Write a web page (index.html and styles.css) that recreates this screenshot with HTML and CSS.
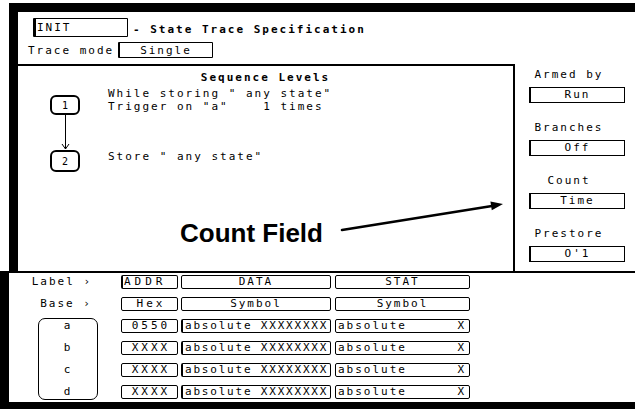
FILE: index.html
```html
<!DOCTYPE html>
<html>
<head>
<meta charset="utf-8">
<title>State Trace Specification</title>
<link rel="stylesheet" href="styles.css">
</head>
<body>
<div class="screen">
  <div class="topbar"></div>
  <div class="upper">
    <div class="lb-up"></div>
    <div class="upper-main">
      <header class="hdr">
        <div class="hrow1">
          <div class="fld init">INIT</div>
          <div class="title">- State Trace Specification</div>
        </div>
        <div class="hrow2">
          <span class="trace-lbl">Trace mode</span>
          <div class="fld single">Single</div>
        </div>
      </header>
      <div class="mid">
        <section class="seq">
          <h2 class="seq-title">Sequence Levels</h2>
          <div class="levels">
            <div class="node n1">1</div>
            <div class="ltext">While storing " any state"<br>Trigger on "a"&nbsp;&nbsp;&nbsp; 1 times</div>
            <svg class="link" width="30" height="35" viewBox="0 0 30 35">
              <line x1="15.5" y1="0" x2="15.5" y2="34" stroke="#000" stroke-width="1"/>
              <path d="M12 29 L15.5 34 L19 29" fill="none" stroke="#000" stroke-width="1"/>
            </svg>
            <div class="node n2">2</div>
            <div class="ltext">Store " any state"</div>
          </div>
          <div class="count-field">Count Field</div>
        </section>
        <aside class="panel">
          <div class="plabel">Armed by</div>
          <div class="pbox">Run</div>
          <div class="plabel">Branches</div>
          <div class="pbox">Off</div>
          <div class="plabel">Count</div>
          <div class="pbox">Time</div>
          <div class="plabel">Prestore</div>
          <div class="pbox last">O'1</div>
        </aside>
      </div>
    </div>
  </div>
  <div class="divider"></div>
  <div class="lower">
    <div class="lb-low"></div>
    <div class="lgrid">
      <div class="rowlbl">Label ›</div>
      <div class="cell c2 addr-lbl">ADDR</div>
      <div class="cell c3 center">DATA</div>
      <div class="cell c4 center">STAT</div>

      <div class="rowlbl">Base ›</div>
      <div class="cell c2 center wide">Hex</div>
      <div class="cell c3 center">Symbol</div>
      <div class="cell c4 center">Symbol</div>

      <div class="abox"><span>a</span><span>b</span><span>c</span><span>d</span></div>

      <div class="cell c2 center wide">0550</div>
      <div class="cell c3 data">absolute XXXXXXXX</div>
      <div class="cell c4 stat"><span>absolute</span><span>X</span></div>

      <div class="cell c2 center wide">XXXX</div>
      <div class="cell c3 data">absolute XXXXXXXX</div>
      <div class="cell c4 stat"><span>absolute</span><span>X</span></div>

      <div class="cell c2 center wide">XXXX</div>
      <div class="cell c3 data">absolute XXXXXXXX</div>
      <div class="cell c4 stat"><span>absolute</span><span>X</span></div>

      <div class="cell c2 center wide">XXXX</div>
      <div class="cell c3 data">absolute XXXXXXXX</div>
      <div class="cell c4 stat"><span>absolute</span><span>X</span></div>
    </div>
  </div>
  <div class="botbar"></div>
  <svg class="callout" width="170" height="40" viewBox="0 0 170 40">
    <line x1="4" y1="34" x2="154" y2="10" stroke="#000" stroke-width="2.6" stroke-linecap="round"/>
    <polygon points="165,8 153.8,14.2 152.4,5.6" fill="#000"/>
  </svg>
</div>
</body>
</html>
```

FILE: styles.css
```css
* {
  box-sizing: border-box;
  margin: 0;
  padding: 0;
}

html,
body {
  width: 635px;
  height: 409px;
  background: #fff;
  overflow: hidden;
}

body {
  font-family: "DejaVu Sans Mono", "Liberation Mono", monospace;
  font-size: 11px;
  letter-spacing: 2px;
  color: #000;
}

.screen {
  position: relative;
  width: 635px;
  height: 409px;
  display: flex;
  flex-direction: column;
}

.topbar {
  flex: none;
  height: 9px;
  margin: 3px 0 0 9px;
  background: #000;
}

.upper {
  flex: none;
  height: 259px;
  display: flex;
}

.lb-up {
  flex: none;
  width: 9px;
  margin-left: 9px;
  background: #000;
}

.upper-main {
  flex: 1;
  display: flex;
  flex-direction: column;
}

/* header */
.hdr {
  flex: none;
  height: 52px;
  padding-top: 6px;
}

.hrow1 {
  display: flex;
  align-items: center;
  padding-left: 15px;
}

.fld {
  border: 1px solid #000;
  border-radius: 1px;
  display: flex;
  align-items: center;
  line-height: 13px;
}

.init {
  width: 95px;
  height: 19px;
  border-left-width: 3px;
  padding-left: 1px;
}

.title {
  margin: 3px 0 0 5px;
  font-weight: bold;
  line-height: 13px;
}

.hrow2 {
  display: flex;
  align-items: center;
  margin-top: 5px;
  padding-left: 10px;
}

.trace-lbl {
  width: 90px;
  line-height: 13px;
}

.single {
  width: 95px;
  height: 16px;
  justify-content: center;
  border-left-width: 2px;
}

/* middle */
.mid {
  flex: 1;
  display: flex;
}

.seq {
  flex: none;
  width: 497px;
  border-top: 2px solid #000;
  border-right: 2px solid #000;
  padding-top: 5px;
}

.seq-title {
  font-size: 11px;
  font-weight: bold;
  line-height: 13px;
  text-align: center;
}

.levels {
  display: grid;
  grid-template-columns: 30px auto;
  column-gap: 28px;
  align-items: start;
  margin-top: 3px;
  padding-left: 32px;
}

.node {
  grid-column: 1;
  border: 2px solid #000;
  border-radius: 6px;
  display: flex;
  align-items: center;
  justify-content: center;
  padding-left: 2px;
  font-size: 10px;
}

.n1 {
  height: 20px;
  margin-top: 8px;
}

.n2 {
  height: 22px;
}

.ltext {
  grid-column: 2;
  line-height: 13px;
  white-space: nowrap;
}

.ltext.store {
  margin-top: -1px;
}

.link {
  display: block;
  grid-column: 1;
}

.count-field {
  margin-top: 46px;
  padding-left: 162px;
  font-family: "Liberation Sans", Arial, sans-serif;
  font-weight: bold;
  font-size: 26px;
  line-height: 30px;
  letter-spacing: 0;
}

.panel {
  flex: 1;
  display: flex;
  flex-direction: column;
  padding: 4px 0 0 14px;
}

.plabel {
  width: 96px;
  padding-right: 16px;
  text-align: center;
  line-height: 13px;
}

.pbox {
  width: 96px;
  height: 16px;
  margin: 6px 0 18px;
  border: 1px solid #000;
  border-left-width: 2px;
  text-align: center;
  line-height: 14px;
}

.pbox.last {
  margin-bottom: 0;
}

.divider {
  flex: none;
  height: 2px;
  background: #000;
}

/* lower */
.lower {
  flex: none;
  height: 129px;
  display: flex;
}

.lb-low {
  flex: none;
  width: 9px;
  background: #000;
}

.lgrid {
  display: grid;
  grid-template-columns: 109px 57px 150px 136px;
  grid-template-rows: repeat(6, 14px);
  row-gap: 8px;
  column-gap: 3px;
  padding-top: 2px;
  align-content: start;
}

.rowlbl {
  grid-column: 1;
  text-align: right;
  padding-right: 26px;
  line-height: 14px;
}

.abox {
  grid-column: 1;
  grid-row: 3 / 7;
  margin: -1px 20px -1px 29px;
  border: 1px solid #000;
  border-radius: 7px;
  display: grid;
  grid-template-rows: repeat(4, 14px);
  row-gap: 8px;
  text-align: center;
  line-height: 14px;
}

.cell {
  border: 1px solid #000;
  border-radius: 2px;
  line-height: 12px;
  white-space: nowrap;
  overflow: hidden;
}

.c2 {
  grid-column: 2;
}

.c3 {
  grid-column: 3;
}

.c4 {
  grid-column: 4;
  margin-left: 1px;
}

.center {
  text-align: center;
}

.wide {
  letter-spacing: 3px;
  padding-left: 3px;
}

.addr-lbl {
  letter-spacing: 4px;
  padding-left: 1px;
  border-left-width: 2px;
}

.data {
  padding-left: 2px;
  letter-spacing: 1.8px;
  border-left-width: 2px;
}

.stat {
  display: flex;
  justify-content: space-between;
  padding: 0 3px 0 2px;
}

.botbar {
  flex: 1;
  background: #000;
}

.callout {
  position: absolute;
  left: 338px;
  top: 196px;
}
```
